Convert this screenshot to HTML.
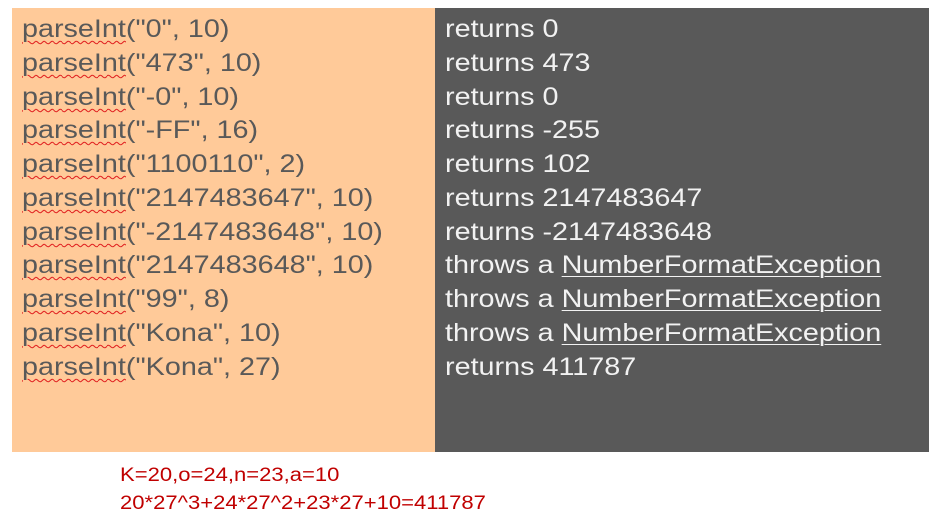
<!DOCTYPE html>
<html><head><meta charset="utf-8"><style>
body{margin:0;width:930px;height:526px;background:#fff;position:relative;overflow:hidden;font-family:"Liberation Sans",sans-serif}
.l{position:absolute;left:12px;top:8px;width:423px;height:444px;background:#FFCA99}
.r{position:absolute;left:435px;top:8px;width:494px;height:444px;background:#595959}
.t{position:absolute;font-size:25px;line-height:34px;white-space:nowrap;transform:scaleX(1.15);transform-origin:0 0}
.lt{left:22px;color:#595959}
.rt{left:445px;color:#F2F2F2}
.sq{text-decoration:underline wavy #e02020;text-decoration-thickness:1px;text-underline-offset:3px}
.u{text-decoration:underline;text-underline-offset:3px;text-decoration-thickness:1px}
.red{position:absolute;left:120px;color:#C00000;font-size:19px;white-space:nowrap;line-height:20px;transform:scaleX(1.16);transform-origin:0 0}
</style></head><body>
<div class="l"></div><div class="r"></div>
<div class="t lt" style="top:12px"><span class="sq">parseInt</span>("0", 10)</div>
<div class="t lt" style="top:46px"><span class="sq">parseInt</span>("473", 10)</div>
<div class="t lt" style="top:80px"><span class="sq">parseInt</span>("-0", 10)</div>
<div class="t lt" style="top:113px"><span class="sq">parseInt</span>("-FF", 16)</div>
<div class="t lt" style="top:147px"><span class="sq">parseInt</span>("1100110", 2)</div>
<div class="t lt" style="top:181px"><span class="sq">parseInt</span>("2147483647", 10)</div>
<div class="t lt" style="top:215px"><span class="sq">parseInt</span>("-2147483648", 10)</div>
<div class="t lt" style="top:248px"><span class="sq">parseInt</span>("2147483648", 10)</div>
<div class="t lt" style="top:282px"><span class="sq">parseInt</span>("99", 8)</div>
<div class="t lt" style="top:316px"><span class="sq">parseInt</span>("Kona", 10)</div>
<div class="t lt" style="top:350px"><span class="sq">parseInt</span>("Kona", 27)</div>

<div class="t rt" style="top:12px">returns 0</div>
<div class="t rt" style="top:46px">returns 473</div>
<div class="t rt" style="top:80px">returns 0</div>
<div class="t rt" style="top:113px">returns -255</div>
<div class="t rt" style="top:147px">returns 102</div>
<div class="t rt" style="top:181px">returns 2147483647</div>
<div class="t rt" style="top:215px">returns -2147483648</div>
<div class="t rt" style="top:248px">throws a <span class="u">NumberFormatException</span></div>
<div class="t rt" style="top:282px">throws a <span class="u">NumberFormatException</span></div>
<div class="t rt" style="top:316px">throws a <span class="u">NumberFormatException</span></div>
<div class="t rt" style="top:350px">returns 411787</div>

<div class="red" style="top:466px">K=20,o=24,n=23,a=10</div>
<div class="red" style="top:494px">20*27^3+24*27^2+23*27+10=411787</div>
</body></html>
